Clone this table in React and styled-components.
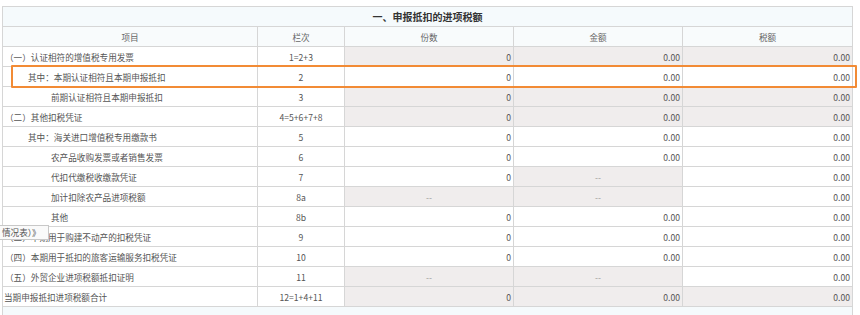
import styled, { createGlobalStyle } from 'styled-components';

const Global = createGlobalStyle`
  body {
    margin: 0;
    background: #fff;
    font-family: "Noto Sans CJK SC", sans-serif;
  }
`;

const rows = [
  { name: '（一）认证相符的增值税专用发票', level: 0, no: '1=2+3', cells: [['0', 1], ['0.00', 1], ['0.00', 1]] },
  { name: '其中：本期认证相符且本期申报抵扣', level: 1, no: '2', cells: [['0', 0], ['0.00', 0], ['0.00', 0]] },
  { name: '前期认证相符且本期申报抵扣', level: 2, no: '3', cells: [['0', 1], ['0.00', 1], ['0.00', 1]] },
  { name: '（二）其他扣税凭证', level: 0, no: '4=5+6+7+8', cells: [['0', 1], ['0.00', 1], ['0.00', 1]] },
  { name: '其中：海关进口增值税专用缴款书', level: 1, no: '5', cells: [['0', 0], ['0.00', 0], ['0.00', 0]] },
  { name: '农产品收购发票或者销售发票', level: 2, no: '6', cells: [['0', 0], ['0.00', 0], ['0.00', 0]] },
  { name: '代扣代缴税收缴款凭证', level: 2, no: '7', cells: [['0', 0], ['--', 1], ['0.00', 0]] },
  { name: '加计扣除农产品进项税额', level: 2, no: '8a', cells: [['--', 1], ['--', 1], ['0.00', 0]] },
  { name: '其他', level: 2, no: '8b', cells: [['0', 0], ['0.00', 0], ['0.00', 0]] },
  { name: '（三）本期用于购建不动产的扣税凭证', level: 0, no: '9', cells: [['0', 0], ['0.00', 0], ['0.00', 0]] },
  { name: '（四）本期用于抵扣的旅客运输服务扣税凭证', level: 0, no: '10', cells: [['0', 0], ['0.00', 0], ['0.00', 0]] },
  { name: '（五）外贸企业进项税额抵扣证明', level: 0, no: '11', cells: [['--', 1], ['--', 1], ['0.00', 0]] },
  { name: '当期申报抵扣进项税额合计', level: -1, no: '12=1+4+11', cells: [['0', 1], ['0.00', 1], ['0.00', 1]] },
];

const App = () => {
  return (
    <Page>
      <Global />
      <Panel>
        <Sheet>
          <colgroup>
            <col style={{ width: 255 }} />
            <col style={{ width: 87 }} />
            <col style={{ width: 169 }} />
            <col style={{ width: 169 }} />
            <col style={{ width: 170 }} />
          </colgroup>
          <thead>
            <tr>
              <Title colSpan={5}>一、申报抵扣的进项税额</Title>
            </tr>
            <tr>
              <Head>项目</Head>
              <Head>栏次</Head>
              <Head>份数</Head>
              <Head>金额</Head>
              <Head>税额</Head>
            </tr>
          </thead>
          <tbody>
            {rows.map((r) => (
              <tr key={r.no}>
                <Name $level={r.level}>{r.name}</Name>
                <No>{r.no}</No>
                {r.cells.map(([v, gray], i) => (
                  <Val key={i} $gray={gray} $dash={v === '--'}>{v}</Val>
                ))}
              </tr>
            ))}
          </tbody>
        </Sheet>
        <Highlight />
        <Tip>情况表）》</Tip>
      </Panel>
    </Page>
  );
};

const Page = styled.div`
  width: 860px;
  height: 315px;
  overflow: hidden;
  padding: 6px 0 0 2px;
  box-sizing: border-box;
`;

const Panel = styled.div`
  position: relative;
  width: 851px;
  height: 320px;
  background: #f5fafc;
  box-shadow: inset 1px 0 0 #d6d6d6, inset -1px 0 0 #d6d6d6;
`;

const Sheet = styled.table`
  width: 851px;
  border-collapse: collapse;
  table-layout: fixed;
  font-size: 8.6px;
  color: #555;
  td, th {
    border: 1px solid #d6d6d6;
    height: 19px;
    padding: 0 2px;
    white-space: nowrap;
    overflow: hidden;
  }
`;

const Title = styled.th`
  background: #f5fafc;
  color: #333;
  font-weight: bold;
  font-size: 10px;
  text-align: center;
`;

const Head = styled.th`
  background: #f8fbfc;
  font-weight: normal;
  color: #666;
  text-align: center;
`;

const Name = styled.td`
  background: #fff;
  text-align: left;
  padding-left: ${(p) => (p.$level < 0 ? 1 : 2 + Math.max(p.$level, 0) * 23)}px !important;
`;

const No = styled.td`
  background: #fff;
  text-align: center;
`;

const Val = styled.td`
  background: ${(p) => (p.$gray ? '#f0eded' : '#fff')};
  text-align: ${(p) => (p.$dash ? 'center' : 'right')};
  color: ${(p) => (p.$dash ? '#999' : '#555')};
`;

const Highlight = styled.div`
  position: absolute;
  left: 9px;
  top: 59px;
  width: 842px;
  height: 19px;
  border: 2px solid #f28b35;
  border-radius: 1px;
  pointer-events: none;
`;

const Tip = styled.div`
  position: absolute;
  left: -2px;
  top: 219px;
  width: 46px;
  height: 13px;
  line-height: 13px;
  background: #fafafa;
  border: 1px solid #c8c8c8;
  border-left: none;
  font-size: 8.6px;
  color: #555;
  padding-left: 2px;
  box-sizing: content-box;
`;

export default App;
